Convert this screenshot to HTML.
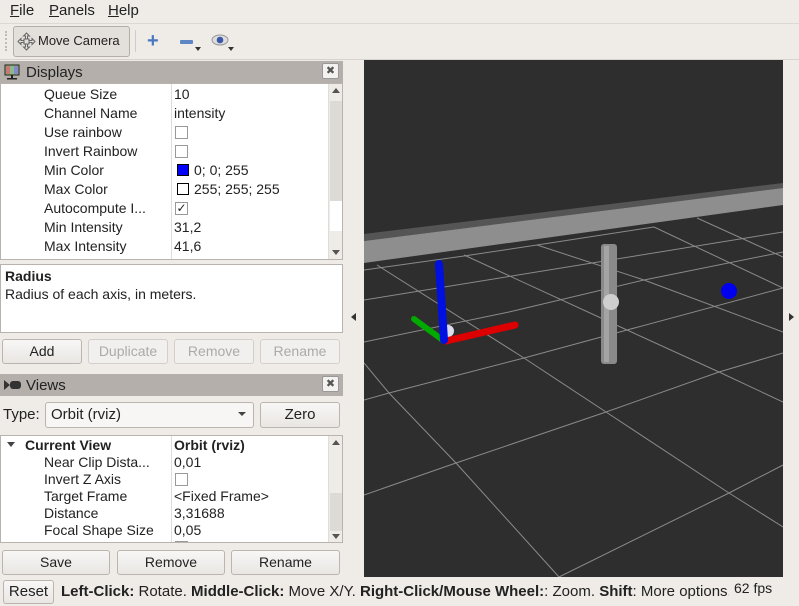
<!DOCTYPE html>
<html><head><meta charset="utf-8"><style>
*{box-sizing:border-box;margin:0;padding:0}
body{width:799px;height:606px;background:#efebe7;font-family:"Liberation Sans","DejaVu Sans",sans-serif;font-size:14px;color:#222;position:relative;overflow:hidden}
.a{position:absolute;white-space:nowrap}
.u{text-decoration:underline}
.btn{position:absolute;border:1px solid #bab5ae;border-radius:3px;background:linear-gradient(#f8f7f6,#e9e6e3);text-align:center;line-height:23px;height:25px}
.dis{color:#aaa;border-color:#d3cfca;background:#f2f0ee}
.hdr{position:absolute;left:0;width:343px;height:22px;background:#b4afab}
.x{position:absolute;width:17px;height:16px;border:1px solid #999;border-radius:2px;background:#f4f2f0;font-size:11px;text-align:center;line-height:14px;font-weight:bold;color:#555}
.tree{position:absolute;left:0;width:343px;background:#fff;border:1px solid #b8b3ad;overflow:hidden}
.r{position:absolute;height:19px;line-height:19px}
.cb{position:absolute;width:13px;height:13px;border:1px solid #999;background:#fff}
.sb{position:absolute;right:0;top:0;width:14px;bottom:0;background:#efebe7;border-left:1px solid #ddd}
</style></head><body>
<div class="a" style="left:10px;top:2px;font-size:15px"><span class="u">F</span>ile</div>
<div class="a" style="left:49px;top:2px;font-size:15px"><span class="u">P</span>anels</div>
<div class="a" style="left:108px;top:2px;font-size:15px"><span class="u">H</span>elp</div>
<div class="a" style="left:0;top:23px;width:799px;height:1px;background:#dcd8d3"></div>
<div class="a" style="left:5px;top:31px;width:3px;height:20px;border-left:2px dotted #bbb"></div>
<div class="a" style="left:13px;top:26px;width:117px;height:31px;border:1px solid #b3aea8;border-radius:3px;background:#e3dfdb"></div>
<svg class="a" style="left:17px;top:32px" width="19" height="19" viewBox="0 0 19 19"><g fill="none" stroke="#666" stroke-width="1"><path d="M9.5 1l3 3h-2v3h-2v-3h-2z M9.5 18l3-3h-2v-3h-2v3h-2z M1 9.5l3-3v2h3v2h-3v2z M18 9.5l-3-3v2h-3v2h3v2z"/><rect x="7" y="7" width="5" height="5"/></g></svg>
<div class="a" style="left:38px;top:33px;font-size:13px">Move Camera</div>
<div class="a" style="left:135px;top:30px;width:1px;height:22px;background:#ccc"></div>
<div class="a" style="left:147px;top:34px;font-size:20px;color:#4a78c0;font-weight:bold;line-height:14px">+</div>
<div class="a" style="left:180px;top:40px;width:13px;height:4px;background:#5f86c4;border-radius:1px"></div>
<div class="a" style="left:195px;top:47px;width:0;height:0;border:3px solid transparent;border-top:4px solid #333"></div>
<svg class="a" style="left:211px;top:34px" width="18" height="12"><ellipse cx="9" cy="6" rx="8" ry="5" fill="#ddd" stroke="#999"/><circle cx="9" cy="6" r="3.3" fill="#3b57a8"/></svg>
<div class="a" style="left:228px;top:47px;width:0;height:0;border:3px solid transparent;border-top:4px solid #333"></div>
<div class="a" style="left:0;top:59px;width:799px;height:1px;background:#d6d2cd"></div>
<div class="hdr" style="top:61px"></div>
<svg class="a" style="left:4px;top:64px" width="16" height="16"><rect x="1" y="1" width="14" height="10" fill="#8b6" stroke="#222"/><rect x="2" y="2" width="4" height="8" fill="#c77"/><rect x="6" y="2" width="4" height="8" fill="#8b8"/><rect x="10" y="2" width="4" height="8" fill="#88c"/><rect x="7" y="11" width="2" height="3" fill="#222"/><rect x="3" y="14" width="10" height="1.5" fill="#222"/></svg>
<div class="a" style="left:26px;top:64px;font-size:15px">Displays</div>
<div class="x" style="left:322px;top:63px">✖</div>
<div class="tree" style="top:83px;height:177px">
 <div class="a" style="left:170px;top:0;width:1px;height:177px;background:#ddd"></div>
 <div class="r" style="left:43px;top:1px">Queue Size</div><div class="r" style="left:173px;top:1px">10</div>
 <div class="r" style="left:43px;top:20px">Channel Name</div><div class="r" style="left:173px;top:20px">intensity</div>
 <div class="r" style="left:43px;top:39px">Use rainbow</div><div class="cb" style="left:174px;top:42px"></div>
 <div class="r" style="left:43px;top:58px">Invert Rainbow</div><div class="cb" style="left:174px;top:61px"></div>
 <div class="r" style="left:43px;top:77px">Min Color</div><div class="cb" style="left:176px;top:80px;width:12px;height:12px;background:#00f;border-color:#000"></div><div class="r" style="left:193px;top:77px">0; 0; 255</div>
 <div class="r" style="left:43px;top:96px">Max Color</div><div class="cb" style="left:176px;top:99px;width:12px;height:12px;border-color:#000"></div><div class="r" style="left:193px;top:96px">255; 255; 255</div>
 <div class="r" style="left:43px;top:115px">Autocompute I...</div><div class="cb" style="left:174px;top:118px;font-size:12px;line-height:11px;text-align:center;font-weight:bold">✓</div>
 <div class="r" style="left:43px;top:134px">Min Intensity</div><div class="r" style="left:173px;top:134px">31,2</div>
 <div class="r" style="left:43px;top:153px">Max Intensity</div><div class="r" style="left:173px;top:153px">41,6</div>
 <div class="sb"><div class="a" style="left:3px;top:4px;border:4px solid transparent;border-bottom:5px solid #555;border-top:0"></div><div class="a" style="left:1px;top:17px;width:12px;height:100px;background:#dedad6"></div><div class="a" style="left:1px;top:117px;width:12px;height:30px;background:#fff"></div><div class="a" style="left:3px;top:166px;border:4px solid transparent;border-top:5px solid #555;border-bottom:0"></div></div>
</div>
<div class="a" style="left:0;top:264px;width:343px;height:69px;background:#fff;border:1px solid #b8b3ad"></div>
<div class="a" style="left:5px;top:268px;font-weight:bold">Radius</div>
<div class="a" style="left:5px;top:286px">Radius of each axis, in meters.</div>
<div class="btn" style="left:2px;top:339px;width:80px">Add</div>
<div class="btn dis" style="left:88px;top:339px;width:80px">Duplicate</div>
<div class="btn dis" style="left:174px;top:339px;width:80px">Remove</div>
<div class="btn dis" style="left:260px;top:339px;width:80px">Rename</div>
<div class="hdr" style="top:374px"></div>
<svg class="a" style="left:4px;top:380px" width="18" height="10"><path d="M0 0l6 5-6 5z" fill="#333"/><rect x="6" y="1" width="11" height="8" rx="3" fill="#333"/></svg>
<div class="a" style="left:26px;top:377px;font-size:15px">Views</div>
<div class="x" style="left:322px;top:376px">✖</div>
<div class="a" style="left:3px;top:406px;font-size:15px">Type:</div>
<div class="a" style="left:45px;top:402px;width:209px;height:26px;border:1px solid #bab5ae;border-radius:3px;background:#f7f6f5"></div>
<div class="a" style="left:51px;top:406px;font-size:15px">Orbit (rviz)</div>
<div class="a" style="left:238px;top:412px;border:4px solid transparent;border-top:4px solid #444"></div>
<div class="btn" style="left:260px;top:402px;width:80px;height:26px;font-size:15px;line-height:24px">Zero</div>
<div class="tree" style="top:435px;height:108px">
 <div class="a" style="left:170px;top:0;width:1px;height:108px;background:#ddd"></div>
 <div class="a" style="left:6px;top:6px;border:4px solid transparent;border-top:5px solid #444"></div>
 <div class="r" style="left:24px;top:0px;font-weight:bold">Current View</div><div class="r" style="left:173px;top:0px;font-weight:bold">Orbit (rviz)</div>
 <div class="r" style="left:43px;top:17px">Near Clip Dista...</div><div class="r" style="left:173px;top:17px">0,01</div>
 <div class="r" style="left:43px;top:34px">Invert Z Axis</div><div class="cb" style="left:174px;top:37px"></div>
 <div class="r" style="left:43px;top:51px">Target Frame</div><div class="r" style="left:173px;top:51px">&lt;Fixed Frame&gt;</div>
 <div class="r" style="left:43px;top:68px">Distance</div><div class="r" style="left:173px;top:68px">3,31688</div>
 <div class="r" style="left:43px;top:85px">Focal Shape Size</div><div class="r" style="left:173px;top:85px">0,05</div>
 <div class="r" style="left:43px;top:102px">Focal Shape Fixed</div><div class="cb" style="left:174px;top:105px"></div>
 <div class="sb"><div class="a" style="left:3px;top:4px;border:4px solid transparent;border-bottom:5px solid #555;border-top:0"></div><div class="a" style="left:1px;top:57px;width:12px;height:38px;background:#dedad6"></div><div class="a" style="left:3px;top:98px;border:4px solid transparent;border-top:5px solid #555;border-bottom:0"></div></div>
</div>
<div class="btn" style="left:2px;top:550px;width:108px">Save</div>
<div class="btn" style="left:117px;top:550px;width:108px">Remove</div>
<div class="btn" style="left:231px;top:550px;width:109px">Rename</div>
<div class="a" style="left:351px;top:313px;border:4px solid transparent;border-right:5px solid #333;border-left:0"></div>
<div class="a" style="left:789px;top:313px;border:4px solid transparent;border-left:5px solid #333;border-right:0"></div>
<svg class="a" style="left:364px;top:60px" width="419" height="517" viewBox="364 60 419 517">
<rect x="364" y="60" width="419" height="517" fill="#2e2e2e"/>
<polygon points="364,234 783,183 783,188 364,241" fill="#555"/>
<polygon points="364,241 783,188 783,205 364,263" fill="#8e8e8e"/>
<g stroke="#8a8a8a" stroke-width="1" fill="none">
<polyline points="364,270 464,256 537,245 654,227"/>
<line x1="364" y1="300" x2="783" y2="232"/>
<polyline points="364,342 509,312 644,280 783,252"/>
<polyline points="364,400 389,393 524,358 627,330 783,288"/>
<polyline points="364,495 456,463 606,412 719,372 783,353"/>
<polyline points="559,577 729,493 783,465"/>
<polyline points="364,363 389,393 456,463 559,577"/>
<polyline points="377,265 524,358 606,412 729,493 783,527"/>
<polyline points="464,255 627,330 719,372 783,402"/>
<polyline points="537,245 644,280 783,332"/>
<line x1="654" y1="227" x2="783" y2="288"/>
<line x1="697" y1="218" x2="783" y2="257"/>
</g>
<rect x="601" y="244" width="16" height="120" rx="3" fill="#8a8a8a"/>
<rect x="604" y="246" width="5" height="116" fill="#a4a4a4"/>
<circle cx="611" cy="302" r="8" fill="#cfcfcf"/>
<circle cx="729" cy="291" r="8" fill="#0000ee"/>
<line x1="414" y1="319" x2="444" y2="341" stroke="#0a0" stroke-width="6" stroke-linecap="round"/>
<circle cx="448" cy="331" r="6" fill="#dde"/>
<line x1="446" y1="341" x2="515" y2="325" stroke="#d00" stroke-width="7" stroke-linecap="round"/>
<line x1="439" y1="264" x2="444" y2="340" stroke="#0010e0" stroke-width="8" stroke-linecap="round"/>
</svg>
<div class="btn" style="left:3px;top:580px;width:51px;height:24px;line-height:22px;font-size:15px">Reset</div>
<div class="a" style="left:61px;top:583px;font-size:15px;width:668px;overflow:hidden"><b>Left-Click:</b> Rotate. <b>Middle-Click:</b> Move X/Y. <b>Right-Click/Mouse Wheel:</b>: Zoom. <b>Shift</b>: More options.</div>
<div class="a" style="left:734px;top:580px;font-size:14px">62 fps</div>
</body></html>
